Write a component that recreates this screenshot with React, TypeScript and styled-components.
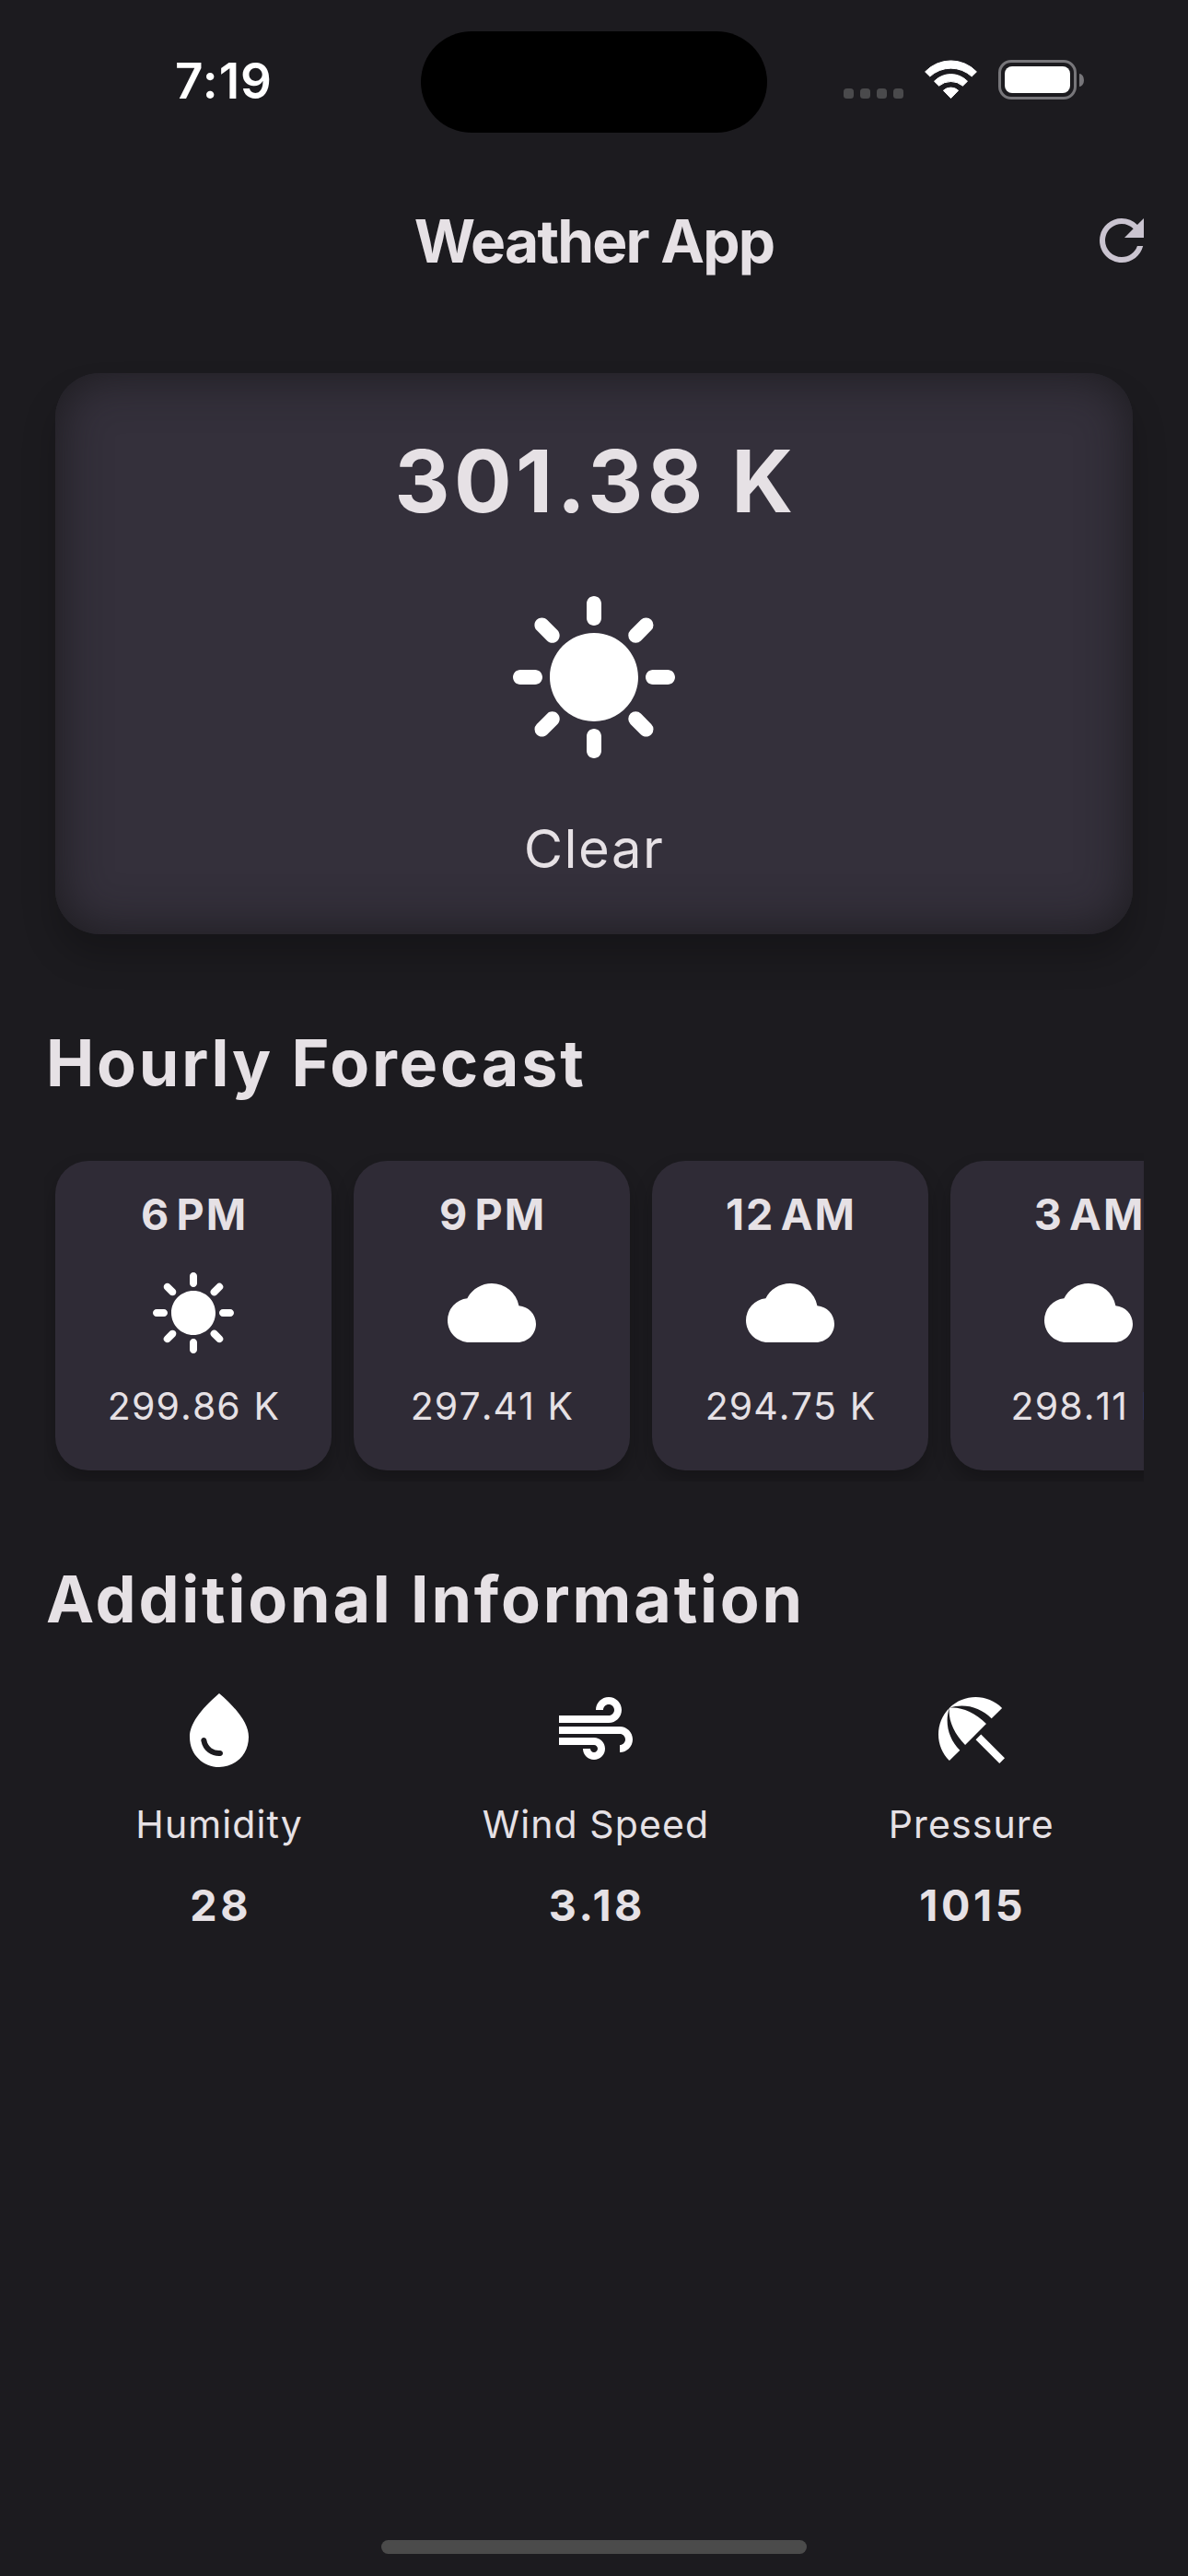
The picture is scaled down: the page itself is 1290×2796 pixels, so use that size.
import React from 'react';
import styled, { createGlobalStyle } from 'styled-components';
import type { IconType } from 'react-icons';
import { MdAir, MdBeachAccess, MdCloud, MdRefresh, MdSunny, MdWaterDrop } from 'react-icons/md';

const GlobalStyle = createGlobalStyle`
  * { box-sizing: border-box; }
  body { margin: 0; background: #1c1b1f; }
`;

const Screen = styled.div`
  display: flex;
  flex-direction: column;
  width: 1290px;
  height: 2796px;
  overflow: hidden;
  background: #1c1b1f;
  color: #e6e1e5;
  font-family: Inter, 'Liberation Sans', sans-serif;
  font-optical-sizing: none;
`;

const StatusBar = styled.div`
  display: grid;
  grid-template-columns: 1fr 376px 1fr;
  height: 177px;
  padding-top: 34px;
`;

const Clock = styled.div`
  padding-left: 190px;
  line-height: 108px;
  font-size: 53px;
  font-weight: 600;
  letter-spacing: 1px;
  color: #fff;
`;

const Island = styled.div`
  height: 110px;
  border-radius: 55px;
  background: #000;
`;

const StatusIcons = styled.div`
  display: flex;
  gap: 23px;
  height: 43px;
  margin: 31px 0 0 83px;
`;

const Signal = styled.div`
  display: flex;
  gap: 7px;
  align-items: flex-end;
  padding-bottom: 1px;
`;

const SignalDot = styled.i`
  width: 11px;
  height: 11px;
  border-radius: 3.5px;
  background: #4a4a4c;
`;

const Battery = styled.div`
  display: flex;
  align-items: center;
  gap: 3px;
`;

const BatteryShell = styled.div`
  width: 85px;
  height: 43px;
  padding: 4px;
  border: 3px solid #77767a;
  border-radius: 14px;
`;

const BatteryLevel = styled.div`
  height: 100%;
  border-radius: 8px;
  background: #fff;
`;

const BatteryTip = styled.i`
  width: 5px;
  height: 14px;
  border-radius: 0 5px 5px 0 / 0 7px 7px 0;
  background: #77767a;
`;

const AppBar = styled.header`
  display: grid;
  grid-template-columns: 1fr auto 1fr;
  align-items: center;
  height: 168px;
  padding: 0 36px;
`;

const Title = styled.h1`
  grid-column: 2;
  margin: 0;
  padding-top: 2px;
  font-size: 64px;
  font-weight: 700;
  letter-spacing: -1.8px;
  line-height: 84px;
`;

const IconButton = styled.button`
  display: flex;
  justify-self: end;
  padding: 0;
  border: 0;
  background: none;
  color: #cac4d0;
  font-size: 72px;
`;

const Body = styled.main`
  display: flex;
  flex-direction: column;
  padding: 48px;
`;

const CurrentCard = styled.section`
  display: flex;
  flex-direction: column;
  align-items: center;
  gap: 48px;
  height: 609px;
  margin: 12px;
  padding-top: 48px;
  border-radius: 48px;
  background: #34303b;
  box-shadow: 0 24px 36px rgba(0, 0, 0, 0.22), inset 0 0 54px rgba(26, 25, 28, 0.95);
`;

const CurrentTemp = styled.div`
  padding-left: 4px;
  font-size: 93px;
  font-weight: 700;
  letter-spacing: 4.5px;
  line-height: 138px;
`;

const Condition = styled.div`
  font-size: 58px;
  letter-spacing: 1.5px;
  line-height: 84px;
`;

const Glyph = styled.span<{ $size: number }>`
  display: flex;
  color: #fff;
  font-size: ${(p) => p.$size}px;
`;

const SectionTitle = styled.h2`
  margin: 0;
  padding: 76px 0 43px 2px;
  font-size: 70px;
  font-weight: 700;
  letter-spacing: 2.8px;
  line-height: 103px;
  white-space: nowrap;
`;

const HourlyList = styled.div`
  display: flex;
  gap: 24px;
  height: 360px;
  padding: 12px;
  overflow: hidden;
`;

const HourCard = styled.article`
  display: flex;
  flex: 0 0 300px;
  flex-direction: column;
  align-items: center;
  gap: 24px;
  height: 336px;
  padding-top: 24px;
  border-radius: 36px;
  background: #2f2b36;
  box-shadow: 0 11px 20px rgba(0, 0, 0, 0.24);
`;

const Hour = styled.div`
  padding: 0 0 1px 2px;
  font-size: 46.6px;
  font-weight: 700;
  letter-spacing: 2px;
  line-height: 68px;
  white-space: nowrap;
`;

const NarrowSpace = styled.span`
  letter-spacing: -1px;
`;

const SmallText = styled.div`
  font-size: 41px;
  letter-spacing: 1.1px;
  line-height: 60px;
  white-space: nowrap;
`;

const Temp = styled(SmallText)`
  margin-top: -1px;
  padding-left: 1px;
  font-kerning: none;
  word-spacing: 1px;
`;

const InfoRow = styled.div`
  display: flex;
  justify-content: space-around;
  padding-left: 2px;
`;

const InfoItem = styled.div`
  display: flex;
  flex-direction: column;
  align-items: center;
  gap: 24px;
`;

const InfoValue = styled(Hour)`
  padding-left: 3px;
  letter-spacing: 3.6px;
`;

const HomeIndicator = styled.div`
  width: 462px;
  height: 15px;
  margin: auto auto 24px;
  border-radius: 8px;
  background: #4b4b4b;
`;

const hours: { hour: string; period: string; icon: IconType; temp: string }[] = [
  { hour: '6', period: 'PM', icon: MdSunny, temp: '299.86 K' },
  { hour: '9', period: 'PM', icon: MdCloud, temp: '297.41 K' },
  { hour: '12', period: 'AM', icon: MdCloud, temp: '294.75 K' },
  { hour: '3', period: 'AM', icon: MdCloud, temp: '298.11 K' },
];

const details: { label: string; icon: IconType; value: string }[] = [
  { label: 'Humidity', icon: MdWaterDrop, value: '28' },
  { label: 'Wind Speed', icon: MdAir, value: '3.18' },
  { label: 'Pressure', icon: MdBeachAccess, value: '1015' },
];

function WifiIcon() {
  return (
    <svg width="57" height="43" viewBox="0 0 57 43" fill="#fff" stroke="#fff" strokeWidth="1" strokeLinejoin="round">
      <path d="M.6 12.9A38.5 38.5 0 0 1 56.4 12.9L51.2 18A33.5 33.5 0 0 0 5.8 18Z" />
      <path d="M10.5 23.2A25 25 0 0 1 46.5 23.2L41.4 28.2A20 20 0 0 0 15.6 28.2Z" />
      <path d="M20.4 33.2A12 12 0 0 1 36.6 33.2L28.5 41.6Z" />
    </svg>
  );
}

export default function App() {
  return (
    <>
      <GlobalStyle />
      <Screen>
        <StatusBar>
          <Clock>7:19</Clock>
          <Island />
          <StatusIcons>
            <Signal>
              <SignalDot />
              <SignalDot />
              <SignalDot />
              <SignalDot />
            </Signal>
            <WifiIcon />
            <Battery>
              <BatteryShell>
                <BatteryLevel />
              </BatteryShell>
              <BatteryTip />
            </Battery>
          </StatusIcons>
        </StatusBar>
        <AppBar>
          <Title>Weather App</Title>
          <IconButton aria-label="Refresh">
            <MdRefresh />
          </IconButton>
        </AppBar>
        <Body>
          <CurrentCard>
            <CurrentTemp>301.38 K</CurrentTemp>
            <Glyph $size={192}>
              <MdSunny />
            </Glyph>
            <Condition>Clear</Condition>
          </CurrentCard>
          <SectionTitle>Hourly Forecast</SectionTitle>
          <HourlyList>
            {hours.map(({ hour, period, icon: Icon, temp }) => (
              <HourCard key={hour + period}>
                <Hour>
                  {hour}
                  <NarrowSpace>{'\u202f'}</NarrowSpace>
                  {period}
                </Hour>
                <Glyph $size={96}>
                  <Icon />
                </Glyph>
                <Temp>{temp}</Temp>
              </HourCard>
            ))}
          </HourlyList>
          <SectionTitle>Additional Information</SectionTitle>
          <InfoRow>
            {details.map(({ label, icon: Icon, value }) => (
              <InfoItem key={label}>
                <Glyph $size={96}>
                  <Icon />
                </Glyph>
                <SmallText>{label}</SmallText>
                <InfoValue>{value}</InfoValue>
              </InfoItem>
            ))}
          </InfoRow>
        </Body>
        <HomeIndicator />
      </Screen>
    </>
  );
}
